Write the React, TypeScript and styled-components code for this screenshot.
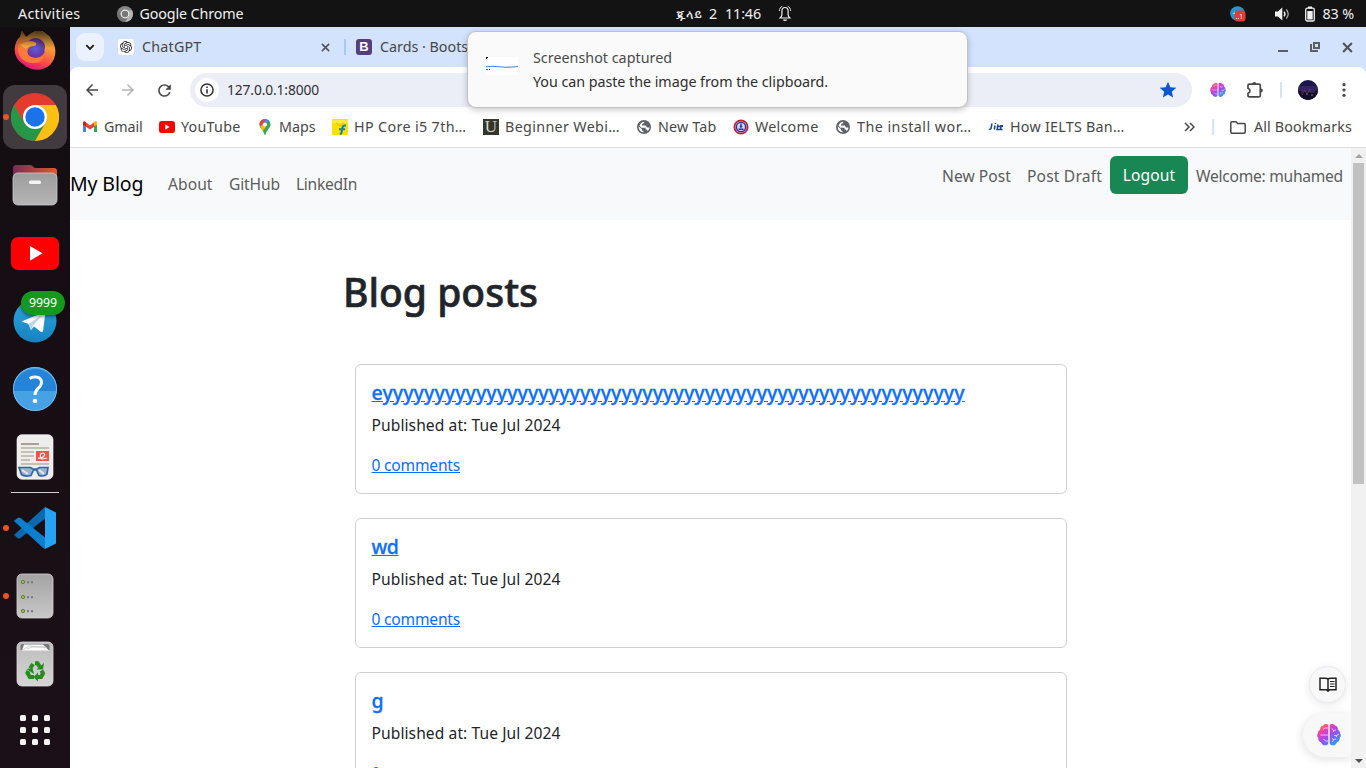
import React from 'react';
import styled, { createGlobalStyle } from 'styled-components';
import { SiOpenai } from 'react-icons/si';
import { MdStar, MdRefresh, MdArrowBack, MdArrowForward } from 'react-icons/md';

const GlobalStyle = createGlobalStyle`
  * { box-sizing: border-box; }
  body { margin: 0; overflow: hidden; }
  svg { display: block; flex: none; }
`;

const Desktop = styled.div`
  position: relative;
  display: flex;
  flex-direction: column;
  width: 1366px;
  height: 768px;
  overflow: hidden;
  background: #131313;
  font-family: 'Noto Sans', 'Open Sans', sans-serif;
`;

const Label = styled.span<{ $ls?: number; $size?: number; $color?: string }>`
  font-size: ${p => p.$size ?? 14.3}px;
  letter-spacing: ${p => p.$ls ?? 0}px;
  color: ${p => p.$color ?? 'inherit'};
  line-height: 20px;
  white-space: nowrap;
`;

/* ---------- system bar ---------- */

const SystemBar = styled.header`
  display: flex;
  align-items: center;
  flex: none;
  height: 27px;
  padding: 0 12px 0 18px;
  color: #f0f0f0;
`;
const SystemLeft = styled.div`
  display: flex;
  align-items: center;
  width: 658px;
`;
const AppMenu = styled.div`
  display: flex;
  align-items: center;
  gap: 6px;
  margin-left: 37px;
`;
const Clock = styled.div`
  display: flex;
  align-items: center;
`;
const ClockPart = styled.div<{ $width: number }>`
  display: flex;
  width: ${p => p.$width}px;
`;
const Tray = styled.div`
  display: flex;
  align-items: center;
  margin-left: auto;
`;
const TraySlot = styled.div<{ $gap: number }>`
  margin-right: ${p => p.$gap}px;
`;

/* ---------- dock ---------- */

const Body = styled.div`
  display: flex;
  flex: 1;
  min-height: 0;
`;
const DockBar = styled.nav`
  display: flex;
  flex-direction: column;
  flex: none;
  width: 70px;
  overflow: hidden;
  background: linear-gradient(#130d12, #1b1017);
`;
const DockSlot = styled.div<{ $first?: boolean; $height?: number; $running?: boolean }>`
  position: relative;
  display: flex;
  align-items: center;
  justify-content: center;
  flex: none;
  height: ${p => p.$height ?? 68}px;
  margin-top: ${p => (p.$first ? -12 : 0)}px;
  &::before {
    content: '';
    display: ${p => (p.$running ? 'block' : 'none')};
    position: absolute;
    left: 3px;
    top: 31px;
    width: 6px;
    height: 6px;
    border-radius: 50%;
    background: #e95420;
    z-index: 1;
  }
`;
const ActiveTile = styled.div`
  display: flex;
  align-items: center;
  justify-content: center;
  width: 64px;
  height: 64px;
  border-radius: 12px;
  background: #413b40;
`;
const DockDivider = styled.div`
  flex: none;
  height: 1px;
  margin: 1px 11px;
  background: #cfcdce;
`;
const CountBadge = styled.span`
  position: absolute;
  left: 21px;
  top: 4px;
  width: 44px;
  height: 24px;
  border-radius: 12px;
  background: #16981f;
  box-shadow: 0 1px 4px rgba(0, 0, 0, 0.6);
  color: #fff;
  font-size: 12.3px;
  line-height: 24px;
  text-align: center;
`;

/* ---------- browser chrome ---------- */

const Browser = styled.main`
  display: flex;
  flex-direction: column;
  flex: 1;
  min-width: 0;
  background: #d3e3fd;
`;
const TabStrip = styled.div`
  display: flex;
  align-items: center;
  flex: none;
  height: 40px;
  padding: 0 13px 0 6px;
  color: #474747;
`;
const TabSearch = styled.div`
  display: flex;
  align-items: center;
  justify-content: center;
  width: 28px;
  height: 28px;
  margin-right: 14px;
  border-radius: 9px;
  background: #ebf1fd;
`;
const Tab = styled.div<{ $width: number }>`
  display: flex;
  align-items: center;
  gap: 8px;
  width: ${p => p.$width}px;
`;
const TabClose = styled.div`
  margin-left: auto;
`;
const Favicon = styled.div<{ $bg: string }>`
  display: flex;
  align-items: center;
  justify-content: center;
  width: 16px;
  height: 16px;
  border-radius: 3px;
  background: ${p => p.$bg};
  color: #fff;
  font: 700 13px/16px 'Liberation Sans', sans-serif;
`;
const Separator = styled.div<{ $margin: string; $color?: string }>`
  flex: none;
  width: 2px;
  height: 16px;
  margin: ${p => p.$margin};
  background: ${p => p.$color ?? '#d3e3fd'};
`;
const WindowControls = styled.div`
  display: flex;
  align-items: center;
  gap: 22px;
  margin-left: auto;
`;
const Toolbar = styled.div`
  display: flex;
  align-items: center;
  flex: none;
  height: 46px;
  padding: 0 8px;
  border-radius: 8px 8px 0 0;
  background: #fff;
  color: #474747;
`;
const ToolButton = styled.div<{ $right: number; $dim?: boolean }>`
  display: flex;
  align-items: center;
  justify-content: center;
  width: 28px;
  height: 28px;
  margin-right: ${p => p.$right}px;
  color: ${p => (p.$dim ? '#b4b4b4' : '#474747')};
`;
const Omnibox = styled.div`
  display: flex;
  align-items: center;
  flex: 1;
  height: 34px;
  margin-right: 12px;
  padding: 0 14px 0 5px;
  border-radius: 17px;
  background: #ebeef7;
`;
const SiteInfo = styled.div`
  display: flex;
  align-items: center;
  justify-content: center;
  width: 24px;
  height: 24px;
  margin-right: 8px;
  border-radius: 50%;
  background: #fff;
`;
const StarSlot = styled.div`
  margin-left: auto;
  color: #0b57d0;
`;
const BookmarkBar = styled.div`
  display: flex;
  align-items: center;
  flex: none;
  height: 35px;
  padding: 0 14px 6px 12px;
  border-bottom: 1px solid #dcdfe0;
  background: #fff;
  color: #474747;
`;
const Bookmark = styled.div<{ $width: number }>`
  display: flex;
  align-items: center;
  gap: 6px;
  flex: none;
  width: ${p => p.$width}px;
`;
const BookmarkEnd = styled.div`
  display: flex;
  align-items: center;
  margin-left: auto;
`;
const AllBookmarks = styled.div`
  display: flex;
  align-items: center;
  gap: 8px;
`;

/* ---------- blog page ---------- */

const Viewport = styled.div`
  position: relative;
  display: flex;
  flex: 1;
  min-height: 0;
  background: #fff;
`;
const Page = styled.div`
  flex: 1;
  overflow: hidden;
  color: #212529;
`;
const SiteNav = styled.nav`
  display: flex;
  height: 72px;
  padding: 8px 8px 8px 0;
  background: #f8f9fa;
  color: #5b5c5d;
`;
const NavLinks = styled.div`
  display: flex;
  align-items: center;
  gap: 16px;
`;
const NavActions = styled.div`
  display: flex;
  align-items: center;
  height: 40px;
  margin-left: auto;
`;
const NavItem = styled.a<{ $ls: number; $width: number }>`
  width: ${p => p.$width}px;
  font-size: 15.6px;
  letter-spacing: ${p => p.$ls}px;
  line-height: 24px;
  white-space: nowrap;
`;
const Brand = styled.a`
  width: 82px;
  color: #000;
  font-size: 19.5px;
  letter-spacing: -0.12px;
  line-height: 30px;
  white-space: nowrap;
`;
const LogoutButton = styled.button`
  width: 78px;
  height: 38px;
  margin: 0 8px 2px 8px;
  padding: 0;
  border: 0;
  border-radius: 6px;
  background: #198754;
  color: #fff;
  font: 15.6px/36px 'Noto Sans', sans-serif;
  letter-spacing: 0.1px;
`;
const Container = styled.div`
  padding: 48px 284px 0 273px;
`;
const Heading = styled.h1`
  margin: 0 0 48px;
  font-size: 39px;
  font-weight: 500;
  line-height: 48px;
  -webkit-text-stroke: 0.6px currentColor;
`;
const PostCard = styled.article`
  height: 130px;
  margin: 0 0 24px 12px;
  padding: 16px 16px 16px 15.5px;
  border: 1px solid #d0d0d1;
  border-radius: 6px;
`;
const PostTitle = styled.h5<{ $ls: number }>`
  margin: 0 0 8px;
  color: #0d6efd;
  font-size: 19.5px;
  font-weight: 500;
  letter-spacing: ${p => p.$ls}px;
  line-height: 24px;
  text-decoration: underline;
  -webkit-text-stroke: 0.3px currentColor;
`;
const PostDate = styled.p`
  margin: 0 0 16px;
  font-size: 15.6px;
  letter-spacing: 0.08px;
  line-height: 24px;
`;
const CommentsLink = styled.a`
  display: block;
  color: #0d6efd;
  font-size: 15.6px;
  letter-spacing: -0.21px;
  line-height: 24px;
  text-decoration: underline;
`;
const Scrollbar = styled.div`
  display: flex;
  flex-direction: column;
  align-items: center;
  flex: none;
  width: 15px;
  padding: 6px 0 5px;
  background: #f1f1f1;
`;
const ScrollThumb = styled.div`
  width: 11px;
  height: 321px;
  margin: 5px 0 auto;
  background: #c1c1c1;
`;
const ScrollArrow = styled.div<{ $up?: boolean }>`
  border: 4px solid transparent;
  border-top-width: ${p => (p.$up ? 0 : 4)}px;
  border-bottom-width: ${p => (p.$up ? 4 : 0)}px;
  border-${p => (p.$up ? 'bottom' : 'top')}-color: ${p => (p.$up ? '#a3a3a3' : '#505050')};
`;
const ReaderButton = styled.div`
  position: absolute;
  right: 20px;
  top: 518px;
  display: flex;
  align-items: center;
  justify-content: center;
  width: 37px;
  height: 37px;
  border: 1px solid #e9e9f0;
  border-radius: 50%;
  background: #f8f8f9;
  box-shadow: 0 2px 8px rgba(0, 0, 0, 0.1);
`;
const AssistantTab = styled.div`
  position: absolute;
  right: 15px;
  top: 565px;
  display: flex;
  align-items: center;
  width: 48px;
  height: 44px;
  padding-left: 14px;
  border-radius: 22px 0 0 22px;
  background: #f8f8f9;
  box-shadow: -1px 2px 10px rgba(0, 0, 0, 0.12);
  clip-path: inset(-20px 0 -20px -20px);
`;

/* ---------- notification ---------- */

const Notification = styled.aside`
  position: absolute;
  left: 467px;
  top: 31px;
  display: flex;
  align-items: center;
  gap: 15px;
  width: 501px;
  height: 77px;
  padding-left: 18px;
  border: 1px solid #c3c1c0;
  border-radius: 9px;
  background: #fafafa;
  box-shadow: 0 2px 6px rgba(0, 0, 0, 0.22);
`;
const ThumbnailSlot = styled.div`
  padding-bottom: 7px;
`;
const NotificationText = styled.div`
  display: flex;
  flex-direction: column;
  gap: 4px;
`;

/* ---------- drawings ---------- */

const ChromeMono = () => (
  <svg width="16" height="16" viewBox="0 0 16 16">
    <circle cx="8" cy="8" r="8" fill="#858585" />
    <path d="M8 4.200H15A8 8 0 0 1 8.300 16L12 10Z" fill="#b4b4b4" />
    <path d="M1.200 4A8 8 0 0 0 7.600 16L10 11.600 4.600 10Z" fill="#727272" />
    <circle cx="8" cy="8" r="4.400" fill="#eee" />
    <circle cx="8" cy="8" r="3.200" fill="#777" />
  </svg>
);
const Bell = () => (
  <svg width="14" height="17" viewBox="0 0 14 17" fill="none" stroke="#f0f0f0">
    <path d="M7 2.500C4.700 2.500 3.900 4.200 3.900 6v3.400c0 1.600-.8 2.600-1.800 3.600h9.800c-1-1-1.800-2-1.800-3.600V6C10.100 4.200 9.300 2.500 7 2.500Z" strokeWidth="1.200" />
    <path d="M4.300 1.300C2.500 2 1.400 3.600 1.300 6M9.700 1.300C11.500 2 12.600 3.600 12.700 6" strokeWidth=".9" />
    <path d="M5 14.500h4a2 1.500 0 0 1-4 0Z" fill="#f0f0f0" stroke="none" />
  </svg>
);
const TelegramTray = () => (
  <svg width="16" height="16" viewBox="0 0 16 16">
    <circle cx="7.500" cy="7.500" r="7.300" fill="#2a94cf" />
    <path d="M2.500 7.600 7 5.600v2.600Z" fill="#fff" />
    <rect x="4.600" y="4.600" width="11" height="11" rx="3.500" fill="#e53935" />
    <text x="5.800" y="13.400" fontSize="6.500" fill="#fff" fontFamily="Noto Sans, sans-serif">..1</text>
  </svg>
);
const Speaker = () => (
  <svg width="15" height="14" viewBox="0 0 15 14" fill="none" stroke="#f0f0f0">
    <path d="M0 4.500h3L7.300.6v12.800L3 9.500H0Z" fill="#f0f0f0" stroke="none" />
    <path d="M9 4.600c1.200 1.500 1.200 3.300 0 4.800" strokeWidth="1.400" />
    <path d="M11.300 2.500c2.300 2.700 2.300 6.300 0 9" strokeWidth="1.300" stroke="#aaa" />
  </svg>
);
const Battery = () => (
  <svg width="10" height="16" viewBox="0 0 10 16">
    <path d="M3 .5h4v2H3Z" fill="#f0f0f0" />
    <rect x=".7" y="2.200" width="8.600" height="12.800" rx="1.600" fill="none" stroke="#f0f0f0" strokeWidth="1.300" />
    <rect x="2.300" y="5" width="5.400" height="8.500" fill="#f0f0f0" />
  </svg>
);
const Firefox = () => (
  <svg width="42" height="42" viewBox="0 0 42 42">
    <defs>
      <linearGradient id="fxBody" x1=".8" y1="0" x2=".35" y2="1">
        <stop offset="0" stopColor="#dbb23a" /><stop offset=".4" stopColor="#f79a36" />
        <stop offset=".72" stopColor="#fa4a48" /><stop offset="1" stopColor="#e0107e" />
      </linearGradient>
      <linearGradient id="fxShade" x1="0" y1="0" x2="0" y2="1">
        <stop offset=".08" stopColor="#100c10" stopOpacity=".72" /><stop offset=".48" stopColor="#100c10" stopOpacity="0" />
      </linearGradient>
      <radialGradient id="fxGlobe"><stop offset="0" stopColor="#5a63d0" /><stop offset="1" stopColor="#6d2f9f" /></radialGradient>
      <clipPath id="fxClip"><path d="M6 9 8 3l4 6 6-4 4-2h6l7 5 4 6c4 8 3 17-3 23-8 7-20 6-27-1C-1 30-1 18 4 11Z" /></clipPath>
    </defs>
    <g clipPath="url(#fxClip)">
      <rect width="42" height="42" fill="url(#fxBody)" />
      <circle cx="21.500" cy="20" r="10" fill="url(#fxGlobe)" />
      <path d="M4 17Q8 11 17 13q3 0 5 2 1 2-2 3-4 0-6 3c-2 5 2 9 7 9 4 0 7-1 9-4 0 6-4 9-9 9C9 36 3 28 4 17Z" fill="#fb7a3a" />
      <path d="M6 17q6-5 14-3 3 1 2 3-1 1-4 1-5 1-6 3Z" fill="#fcae3c" />
      <path d="M20 5q7 3 10 8 2 6 0 11 5-5 4-12-1-6-6-10Z" fill="#e5a637" />
      <rect width="42" height="42" fill="url(#fxShade)" />
    </g>
  </svg>
);
const Chrome = () => (
  <svg width="48" height="48" viewBox="0 0 48 48">
    <circle cx="24" cy="24" r="24" fill="#e33b2e" />
    <path d="M3.200 12A24 24 0 0 0 24 48L34.400 30 24 24 13.600 30Z" fill="#269746" />
    <path d="M24 48 34.400 30 36 24 24 12H44.800A24 24 0 0 1 24 48Z" fill="#fcc012" />
    <circle cx="24" cy="24" r="12" fill="#fff" />
    <circle cx="24" cy="24" r="9.700" fill="#1a73e8" />
  </svg>
);
const Files = () => (
  <svg width="46" height="42" viewBox="0 0 46 42">
    <defs>
      <linearGradient id="flTab"><stop offset="0" stopColor="#7a2c57" /><stop offset="1" stopColor="#e3562c" /></linearGradient>
      <linearGradient id="flBody" x1="0" y1="0" x2="0" y2="1"><stop offset="0" stopColor="#9d9d9d" /><stop offset="1" stopColor="#b5b5b5" /></linearGradient>
    </defs>
    <path d="M1 14V4q0-3 3-3h14q2 0 3 1.500T24 4h18q3 0 3 3v12H1Z" fill="url(#flTab)" />
    <rect x="1" y="9" width="44" height="32" rx="5" fill="url(#flBody)" stroke="#c9c9c9" strokeWidth=".8" />
    <rect x="17" y="16.500" width="12" height="3.500" rx="1.500" fill="#f4f4f4" />
  </svg>
);
const YouTube = ({ width, height }: { width: number; height: number }) => (
  <svg width={width} height={height} viewBox="0 0 48 33" preserveAspectRatio="none">
    <rect width="48" height="33" rx="7" fill="#f00" />
    <path d="M19 9 31.500 16.300 19 23.800Z" fill="#fff" />
  </svg>
);
const Telegram = () => (
  <svg width="44" height="44" viewBox="0 0 44 44">
    <defs><linearGradient id="tg" x1="0" y1="0" x2="0" y2="1"><stop offset="0" stopColor="#2ea6dc" /><stop offset="1" stopColor="#1683c0" /></linearGradient></defs>
    <circle cx="22" cy="22" r="21.500" fill="url(#tg)" />
    <path d="M8.500 22.500 32.500 12.500 30 32.500 28 33 21 27.500 18 31 15.500 25Z" fill="#fff" />
    <path d="M15.500 25 29 16 20 26.500 18 31Z" fill="#b9d5e8" />
  </svg>
);
const Help = () => (
  <svg width="46" height="46" viewBox="0 0 46 46">
    <circle cx="23" cy="23" r="22" fill="#46a2e4" />
    <path d="M1 25a22 22 0 1 1 44 0Z" fill="#2584d8" />
    <circle cx="23" cy="23" r="21.600" fill="none" stroke="#7fc0ee" strokeWidth=".8" />
    <path d="M17.500 12.500c3.500-2.500 12-2.500 12 4 0 6-6.500 5.500-6.500 12.500" fill="none" stroke="#fff" strokeWidth="3" />
    <circle cx="23" cy="35" r="2.300" fill="#fff" />
  </svg>
);
const Reader = () => (
  <svg width="38" height="46" viewBox="0 0 38 46">
    <rect x="1" y=".7" width="36" height="44.600" rx="5" fill="#efedeb" stroke="#fff" strokeWidth=".6" />
    <path d="M5 10h18" stroke="#a9a093" strokeWidth="2" />
    <path d="M5 14h28M5 18h13M5 22h13M5 26h9M5 30h28" stroke="#c5c0b6" strokeWidth="2" />
    <rect x="20" y="17" width="13" height="10" fill="#ee5547" />
    <path d="M22 24c5 1 9-4 5-5-4 0-3 6 0 6l4-1" fill="none" stroke="#fff" strokeWidth="1.200" />
    <path d="M3 33.500h11.500l2.500 1.500h4l2.500-1.500H32l-1 6.500q-2.500 3-8 1.500L20.500 36h-3L15 41.500q-6.500 1.500-9.500-1Z" fill="#9db3cc" stroke="#2e67ac" strokeWidth="1.700" />
    <path d="m6 36 6 4m11-4 5 4" stroke="#e8e8e8" strokeWidth="2" />
  </svg>
);
const VsCode = () => (
  <svg width="42" height="42" viewBox="0 0 42 42">
    <path d="m0 28 3.500 3q1.500 1 3 0L31 11.500V0Z" fill="#0b69b0" />
    <path d="m0 14 3.500-3q1.500-1 3 0L31 30.500V42L28 40Z" fill="#0c80ce" />
    <path d="M31 0 42 5.500v31L31 42Z" fill="#26a3f1" />
  </svg>
);
const Drives = () => (
  <svg width="38" height="46" viewBox="0 0 38 46">
    <defs><linearGradient id="dr" x1="0" y1="0" x2="0" y2="1"><stop offset="0" stopColor="#a3a3a3" /><stop offset="1" stopColor="#c8c8c8" /></linearGradient></defs>
    <rect x="1" y="1" width="36" height="44" rx="5" fill="url(#dr)" stroke="#d5d5d5" strokeWidth=".8" />
    {[9, 24, 38].map(y => (
      <g key={y} fill="#777">
        <circle cx="7" cy={y} r="1.700" fill="#8fc04b" stroke="#55713a" strokeWidth=".8" />
        <rect x="11" y={y - 0.8} width="2" height="2" /><rect x="15" y={y - 0.8} width="2" height="2" />
      </g>
    ))}
  </svg>
);
const Trash = () => (
  <svg width="38" height="46" viewBox="0 0 38 46">
    <defs><linearGradient id="tr" x1="0" y1="0" x2="0" y2="1"><stop offset="0" stopColor="#bdbdbd" /><stop offset="1" stopColor="#d5d5d5" /></linearGradient></defs>
    <rect x="1" y="1" width="36" height="44" rx="5" fill="url(#tr)" stroke="#dcdcdc" strokeWidth=".8" />
    <path d="M4.500 9V5q0-2 2-2h25q2 0 2 2v4Z" fill="#777" />
    <path d="m6 9.500 2-6h19l6 6Z" fill="#fff" />
    <path d="m7 9 6-4 18 1.500M11 8l5-2h14" fill="none" stroke="#bbb" strokeWidth=".7" />
    <g fill="none" stroke="#278a1e" strokeWidth="4">
      <path d="M14.300 27.300 17 23" /><path d="M19 22.300h2.500L24 26" />
      <path d="M12.500 30 11.500 32l2.300 4H18" /><path d="M21 36h4l2-3.500-1.500-3" />
    </g>
    <path d="m20.500 28.500 6.500 0 1-6.500ZM22 31.500v9l-4.500-4.500ZM10.500 28l6-1 1.500 6Z" fill="#278a1e" />
  </svg>
);
const AppGrid = () => (
  <svg width="30" height="30" viewBox="0 0 30 30" fill="#f3f3f3">
    {[0, 12, 24].map(y => [0, 12, 24].map(x => <rect key={`${x}-${y}`} x={x} y={y} width="6" height="6" rx="1.600" />))}
  </svg>
);
const Brain = ({ size, id }: { size: number; id: string }) => (
  <svg width={size} height={size} viewBox="0 0 24 24">
    <defs>
      <linearGradient id={id} x1=".1" y1="0" x2=".9" y2="1">
        <stop offset="0" stopColor="#f9a11b" /><stop offset=".25" stopColor="#f03fb0" />
        <stop offset=".55" stopColor="#9b4df0" /><stop offset="1" stopColor="#12b3ff" />
      </linearGradient>
    </defs>
    <path d="M11.300 2.500C10.500.6 7 .7 6.200 2.600 3.900 2.800 2.700 4.900 3.100 6.700 1.200 7.700.6 9.200 1 10.600-.3 11.800 0 14 1.300 14.800 1 17 2.200 18.800 4 19.200 4.600 21.600 7 22.800 9 22.300 10.300 22.200 11.300 21.300 11.300 20ZM12.700 2.500C13.500.6 17 .7 17.800 2.600 20.100 2.800 21.300 4.900 20.900 6.700 22.800 7.700 23.400 9.200 23 10.600 24.300 11.800 24 14 22.700 14.800 23 17 21.800 18.800 20 19.200 19.400 21.600 17 22.800 15 22.300 13.700 22.200 12.700 21.300 12.700 20Z" fill={`url(#${id})`} />
    <g fill="none" stroke="#fff" strokeOpacity=".65" strokeWidth="1">
      <path d="M11.300 5H8L6 6.500M11.300 12H3.500M11.300 18H8.500L6.500 16M15 5.500l1.500 2L19 7M16.500 7.500V9M22 11l-2.500 1.500H17M19.500 12.500V14M15.500 19l1-2.500 2.500-.5M16.500 16.500 15 15.500" />
    </g>
  </svg>
);
const Chevron = () => (
  <svg width="10" height="7" viewBox="0 0 10 7"><path d="m1.300 1.200 3.700 3.700 3.700-3.700" fill="none" stroke="#1f1f1f" strokeWidth="1.900" /></svg>
);
const Cross = ({ size, weight }: { size: number; weight: number }) => (
  <svg width={size} height={size} viewBox="0 0 10 10"><path d="m1 1 8 8M9 1 1 9" stroke="#505357" strokeWidth={weight} /></svg>
);
const Info = () => (
  <svg width="14" height="14" viewBox="0 0 14 14">
    <circle cx="7" cy="7" r="6.100" fill="none" stroke="#303134" strokeWidth="1.500" />
    <path d="M7 6.200v4.300M7 3.400v1.700" stroke="#303134" strokeWidth="1.600" />
  </svg>
);
const Puzzle = () => (
  <svg width="18" height="18" viewBox="0 0 18 18">
    <path d="M3.300 3.200H13q1.300 0 1.300 1.300v10q0 1.300-1.300 1.300H3.300q-1.300 0-1.300-1.300V12.300q2-.6 2-2.500T2 7.300V4.500q0-1.300 1.300-1.300Z" fill="none" stroke="#474747" strokeWidth="1.700" />
    <path d="M6.300 3a2 2 0 0 1 4 0ZM14.800 7.500a2 2 0 0 1 0 4Z" fill="#474747" />
  </svg>
);
const Folder = () => (
  <svg width="16" height="13" viewBox="0 0 16 13">
    <path d="M.8 2q0-1.200 1.200-1.200h4l1.700 1.700H14q1.200 0 1.200 1.200V11q0 1.200-1.200 1.200H2Q.8 12.200.8 11Z" fill="none" stroke="#474747" strokeWidth="1.500" />
  </svg>
);
const Avatar = () => (
  <svg width="20" height="20" viewBox="0 0 20 20">
    <defs><clipPath id="av"><circle cx="10" cy="10" r="10" /></clipPath></defs>
    <g clipPath="url(#av)">
      <rect width="20" height="20" fill="#1d1648" /><rect y="6" width="20" height="6" fill="#33245f" />
      <rect y="11" width="20" height="9" fill="#120e25" />
      <path d="M3 12h3v-2h1v2h4V9h1v3h5" fill="none" stroke="#54386b" />
      <path d="M4 14h1m3 0h2m3 1h2" stroke="#86629b" />
    </g>
  </svg>
);
const Dots = () => (
  <svg width="4" height="14" viewBox="0 0 4 14" fill="#474747"><circle cx="2" cy="1.700" r="1.600" /><circle cx="2" cy="7" r="1.600" /><circle cx="2" cy="12.300" r="1.600" /></svg>
);
const Gmail = () => (
  <svg width="16" height="16" viewBox="0 0 16 16">
    <path d="M1 3.800V13h3V7Z" fill="#4285f4" /><path d="M15 3.800V13h-3V7Z" fill="#34a853" />
    <path d="M1 6V4q0-1.800 2-1.400l5 3.900 5-3.900q2-.4 2 1.400v2L8 10.500Z" fill="#ea4335" />
    <path d="M12 7V3.300q3-2 3 .7v2Z" fill="#fbbc04" /><path d="M4 7V3.300q-3-2-3 .7v2Z" fill="#c5221f" />
  </svg>
);
const Maps = () => (
  <svg width="16" height="16" viewBox="0 0 16 16">
    <defs><clipPath id="pin"><path d="M8 0a5.500 5.500 0 0 1 5.500 5.500C13.500 9 9.500 11 8.700 15.300q-.7 1.200-1.400 0C6.500 11 2.500 9 2.500 5.500A5.500 5.500 0 0 1 8 0Z" /></clipPath></defs>
    <g clipPath="url(#pin)">
      <rect width="16" height="16" fill="#34a853" /><path d="M2 0h12L3 11Z" fill="#4285f4" />
      <path d="M2 0h5.500L8 4 4 7.500 2 5Z" fill="#ea4335" /><path d="m2 9 4-4 3 3-5 6Z" fill="#fbbc04" />
      <circle cx="8" cy="5.500" r="2.100" fill="#fff" />
    </g>
  </svg>
);
const Flipkart = () => (
  <svg width="16" height="16" viewBox="0 0 16 16">
    <rect width="16" height="16" rx="1" fill="#fddf00" /><path d="M0 1h16v3H0Z" fill="#ffeb3b" />
    <path d="M4.500 3.500q0 3 3.500 3t3.500-3" fill="none" stroke="#dfc000" />
    <path d="M14 6.600q-3.200-.6-3.600 2l-1 5.400q-.2 1-1.600 1M7 10.300h6" fill="none" stroke="#1578d4" strokeWidth="2" />
  </svg>
);
const UBox = styled(Favicon)`
  border-radius: 0;
  color: #d5d5cc;
  font: 17px/16px 'Liberation Serif', serif;
`;
const Globe = () => (
  <svg width="16" height="16" viewBox="0 0 16 16">
    <circle cx="8" cy="8" r="7" fill="#5f6368" />
    <path d="M2.600 7.200 6 10.300v1l2.300 1.900q-5.500.2-5.700-6ZM8.500 2.700q-.3 2-2.200 2.200l-.4 1.700h4l1 2h2.500q.2 2-1.600 3.400l-1.200-1.400-1-.4V8.700H5.300L3.500 6.500Q5 2.700 8.500 2.700Z" fill="#fff" />
  </svg>
);
const Crest = () => (
  <svg width="16" height="16" viewBox="0 0 16 16">
    <circle cx="8" cy="8" r="6.700" fill="#c5b6cd" stroke="#bb2435" strokeWidth="1.700" />
    <circle cx="8" cy="8" r="4.600" fill="#d4d9f2" stroke="#27379c" strokeWidth="1.400" />
    <path d="M5.500 10.300h5M8 4.500v2" stroke="#27379c" strokeWidth="1.400" /><circle cx="8" cy="7.500" r="1.300" fill="#27379c" />
  </svg>
);
const Ielts = () => (
  <svg width="16" height="16" viewBox="0 0 16 16">
    <circle cx="8" cy="8" r="7.500" fill="#fff" stroke="#eee" strokeWidth=".6" />
    <path d="M4 4.500 3 9.500q-1 1.300-2 .5M7 6.500l-.7 4M7.500 4v1M10 5.500l-1 5h3M9.700 7.500h4.500M13 6l-.5 4.500h2M14.300 6v2" fill="none" stroke="#1d4788" strokeWidth="1.500" />
  </svg>
);
const Guillemet = () => (
  <svg width="11" height="10" viewBox="0 0 11 10"><path d="m1 1 4 4-4 4M6 1l4 4-4 4" fill="none" stroke="#474747" strokeWidth="1.500" /></svg>
);
const Book = () => (
  <svg width="18" height="16" viewBox="0 0 18 16" fill="none" stroke="#222">
    <path d="M9 2.300Q8 1.300 6.500 1.300H1v11.400h6.500L9 14.200l1.500-1.500H17V1.300h-5.500Q10 1.300 9 2.300V14" strokeWidth="1.500" />
    <path d="M11 4.500h4.500M11 7h4.500M11 9.500h4.500" strokeWidth="1.200" />
  </svg>
);
const Thumbnail = () => (
  <svg width="32" height="18" viewBox="0 0 32 18">
    <rect width="32" height="18" fill="#fff" /><path d="M0 0h2v1H1v1H0Z" fill="#111" />
    <path d="M0 9.800q7-1 13 0t19-.3" fill="none" stroke="#3c83ee" strokeWidth="1.100" />
    <path d="M0 12.500h2M3 12.500h1" stroke="#333" strokeWidth=".8" />
  </svg>
);
const Minimize = () => <svg width="10" height="10" viewBox="0 0 10 10"><path d="M0 9h10" stroke="#5c6066" strokeWidth="2" /></svg>;
const Restore = () => (
  <svg width="10" height="10" viewBox="0 0 10 10" fill="none" stroke="#5c6066"><rect x="4" y="1" width="5" height="5" strokeWidth="2" /><path d="M1 2v7h7" strokeWidth="2" /></svg>
);

const bookmarks = [
  { label: 'Gmail', width: 77, ls: -0.14, icon: <Gmail /> },
  { label: 'YouTube', width: 98, ls: 0.24, icon: <YouTube width={16} height={12} /> },
  { label: 'Maps', width: 75, ls: -0.04, icon: <Maps /> },
  { label: 'HP Core i5 7th…', width: 151, ls: 0.36, icon: <Flipkart /> },
  { label: 'Beginner Webi…', width: 153, ls: 0.35, icon: <UBox $bg="#34352b">U</UBox> },
  { label: 'New Tab', width: 97, ls: 0.18, icon: <Globe /> },
  { label: 'Welcome', width: 102, ls: 0.25, icon: <Crest /> },
  { label: 'The install wor…', width: 153, ls: 0.47, icon: <Globe /> },
  { label: 'How IELTS Ban…', width: 150, ls: 0.26, icon: <Ielts /> },
];

const posts = [
  { title: 'eyyyyyyyyyyyyyyyyyyyyyyyyyyyyyyyyyyyyyyyyyyyyyyyyyyyyyyyy', ls: 0.1 },
  { title: 'wd', ls: -0.41 },
  { title: 'g', ls: 0 },
];

export default function App() {
  return (
    <Desktop>
      <GlobalStyle />
      <SystemBar>
        <SystemLeft>
          <Label $ls={0.29}>Activities</Label>
          <AppMenu><ChromeMono /><Label $ls={-0.12}>Google Chrome</Label></AppMenu>
        </SystemLeft>
        <Clock>
          <ClockPart $width={33}><Label $ls={-0.2} $size={13.4}>ጁላይ</Label></ClockPart>
          <ClockPart $width={16}><Label>2</Label></ClockPart>
          <ClockPart $width={53}><Label $ls={-0.11}>11:46</Label></ClockPart>
          <Bell />
        </Clock>
        <Tray>
          <TraySlot $gap={29}><TelegramTray /></TraySlot>
          <TraySlot $gap={15}><Speaker /></TraySlot>
          <TraySlot $gap={8}><Battery /></TraySlot>
          <Label $ls={-0.12}>83 %</Label>
        </Tray>
      </SystemBar>
      <Body>
        <DockBar>
          <DockSlot $first><Firefox /></DockSlot>
          <DockSlot $running><ActiveTile><Chrome /></ActiveTile></DockSlot>
          <DockSlot><Files /></DockSlot>
          <DockSlot><YouTube width={48} height={33} /></DockSlot>
          <DockSlot><Telegram /><CountBadge>9999</CountBadge></DockSlot>
          <DockSlot><Help /></DockSlot>
          <DockSlot><Reader /></DockSlot>
          <DockDivider />
          <DockSlot $running><VsCode /></DockSlot>
          <DockSlot $running><Drives /></DockSlot>
          <DockSlot><Trash /></DockSlot>
          <DockSlot $height={64}><AppGrid /></DockSlot>
        </DockBar>
        <Browser>
          <TabStrip>
            <TabSearch><Chevron /></TabSearch>
            <Tab $width={212}>
              <Favicon $bg="#fff"><SiOpenai size={12} color="#222" /></Favicon>
              <Label $ls={0.21}>ChatGPT</Label>
              <TabClose><Cross size={9} weight={1.7} /></TabClose>
            </Tab>
            <Separator $margin="0 10px 0 14px" $color="#a8c7fa" />
            <Tab $width={200}>
              <Favicon $bg="#563d7c">B</Favicon>
              <Label>Cards · Boots</Label>
            </Tab>
            <WindowControls><Minimize /><Restore /><Cross size={11} weight={1.9} /></WindowControls>
          </TabStrip>
          <Toolbar>
            <ToolButton $right={8}><MdArrowBack size={18} /></ToolButton>
            <ToolButton $right={8} $dim><MdArrowForward size={18} /></ToolButton>
            <ToolButton $right={12}><MdRefresh size={19} /></ToolButton>
            <Omnibox>
              <SiteInfo><Info /></SiteInfo>
              <Label $size={13.8} $ls={-0.12} $color="#303134">127.0.0.1:8000</Label>
              <StarSlot><MdStar size={20} /></StarSlot>
            </Omnibox>
            <ToolButton $right={9}><Brain size={16} id="brainSmall" /></ToolButton>
            <ToolButton $right={11}><Puzzle /></ToolButton>
            <Separator $margin="0 12px 0 0" />
            <ToolButton $right={8}><Avatar /></ToolButton>
            <ToolButton $right={0}><Dots /></ToolButton>
          </Toolbar>
          <BookmarkBar>
            {bookmarks.map(b => (
              <Bookmark key={b.label} $width={b.width}>{b.icon}<Label $ls={b.ls}>{b.label}</Label></Bookmark>
            ))}
            <BookmarkEnd>
              <Guillemet />
              <Separator $margin="0 16px 0 17px" />
              <AllBookmarks><Folder /><Label $ls={0.14}>All Bookmarks</Label></AllBookmarks>
            </BookmarkEnd>
          </BookmarkBar>
          <Viewport>
            <Page>
              <SiteNav>
                <NavLinks>
                  <Brand>My Blog</Brand>
                  <NavItem $ls={0.05} $width={45}>About</NavItem>
                  <NavItem $ls={-0.13} $width={51}>GitHub</NavItem>
                  <NavItem $ls={-0.31} $width={61}>LinkedIn</NavItem>
                </NavLinks>
                <NavActions>
                  <NavItem $ls={0.05} $width={85}>New Post</NavItem>
                  <NavItem $ls={0.17} $width={75}>Post Draft</NavItem>
                  <LogoutButton>Logout</LogoutButton>
                  <NavItem $ls={-0.26} $width={147}>Welcome: muhamed</NavItem>
                </NavActions>
              </SiteNav>
              <Container>
                <Heading>Blog posts</Heading>
                {posts.map(p => (
                  <PostCard key={p.title}>
                    <PostTitle $ls={p.ls}>{p.title}</PostTitle>
                    <PostDate>Published at: Tue Jul 2024</PostDate>
                    <CommentsLink>0 comments</CommentsLink>
                  </PostCard>
                ))}
              </Container>
            </Page>
            <Scrollbar><ScrollArrow $up /><ScrollThumb /><ScrollArrow /></Scrollbar>
            <ReaderButton><Book /></ReaderButton>
            <AssistantTab><Brain size={24} id="brainLarge" /></AssistantTab>
          </Viewport>
        </Browser>
      </Body>
      <Notification>
        <ThumbnailSlot><Thumbnail /></ThumbnailSlot>
        <NotificationText>
          <Label $color="#4a4a4a" $ls={0.02}>Screenshot captured</Label>
          <Label $color="#2e2e2e" $ls={-0.04}>You can paste the image from the clipboard.</Label>
        </NotificationText>
      </Notification>
    </Desktop>
  );
}
